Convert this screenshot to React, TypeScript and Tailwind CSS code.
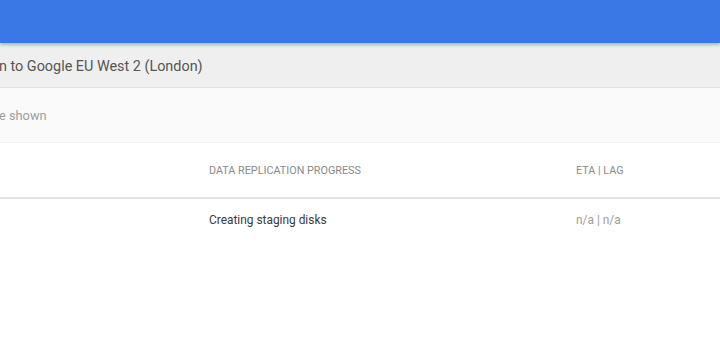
import React from "react";

const rows = [{ progress: "Creating staging disks", eta: "n/a", lag: "n/a" }];

export default function App() {
  return (
    <div className="w-[720px] h-[340px] overflow-hidden bg-white font-['Roboto',sans-serif]">
      {/* app bar */}
      <div className="h-[43px] bg-[#3979e6] shadow-[0_2px_3px_rgba(0,0,0,0.25)] relative z-10" />

      {/* breadcrumb / title strip */}
      <div className="h-[45px] pt-[3px] bg-[#efefef] border-b border-[#e2e2e2] flex items-center">
        <span className="text-[14.4px] text-[#555] -ml-[1px] whitespace-nowrap">n to Google EU West 2 (London)</span>
      </div>

      {/* filter note */}
      <div className="h-[55px] pt-[2px] bg-[#fafafa] border-b border-[#f2f2f2] flex items-center">
        <span className="text-[12.8px] text-[#9e9e9e] -ml-[1px] whitespace-nowrap">e shown</span>
      </div>

      {/* table */}
      <table className="w-full border-collapse text-left">
        <thead>
          <tr className="h-[55px] border-b-2 border-[#e3e3e3]">
            <th className="w-[209px]" />
            <th className="w-[367px] pt-[3px] text-[10.8px] font-normal uppercase text-[#8a8a8a]">Data replication progress</th>
            <th className="pt-[3px] text-[10.8px] font-normal uppercase text-[#8a8a8a]">ETA | LAG</th>
          </tr>
        </thead>
        <tbody>
          {rows.map((r) => (
            <tr key={r.progress} className="h-[43px]">
              <td />
              <td className="pt-[2px] text-[11.9px] text-[#3a3a3a]">{r.progress}</td>
              <td className="pt-[2px] text-[11.9px] text-[#9e9e9e]">
                {r.eta} | {r.lag}
              </td>
            </tr>
          ))}
        </tbody>
      </table>
    </div>
  );
}
